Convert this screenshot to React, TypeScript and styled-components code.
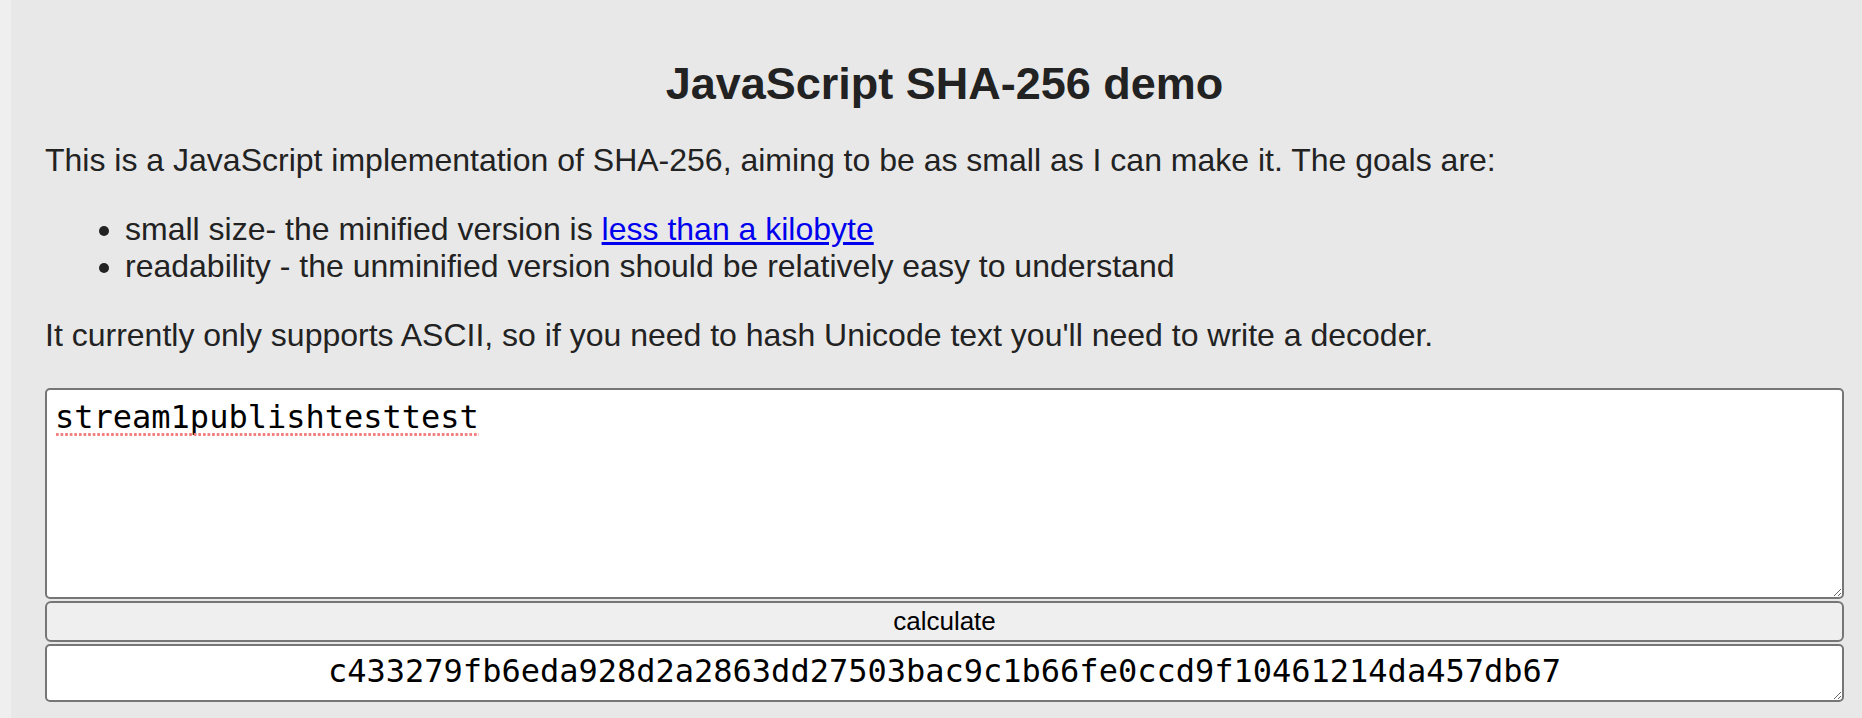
import React from "react";
import styled, { createGlobalStyle } from "styled-components";

const Global = createGlobalStyle`
  html, body {
    margin: 0;
    padding: 0;
    background: #efefef;
  }
  body {
    font-family: "Liberation Sans", Arial, Helvetica, sans-serif;
    color: #222;
  }
`;

const Page = styled.main`
  margin-left: 11px;
  min-height: 718px;
  background: #e8e8e8;
  padding: 58px 18px 0 34px;
  box-sizing: border-box;
`;

const Title = styled.h1`
  margin: 0 0 32px;
  font-size: 45px;
  font-weight: bold;
  line-height: normal;
  text-align: center;
  color: #222;
`;

const Para = styled.p`
  margin: 0 0 32px;
  font-size: 32px;
  line-height: normal;
`;

const List = styled.ul`
  margin: 0 0 32px;
  padding-left: 80px;
  font-size: 32px;
  line-height: normal;
`;

const Link = styled.a`
  color: #0000ee;
  text-decoration: underline;
`;

const Form = styled.div`
  display: flex;
  flex-direction: column;
  gap: 2px;
  padding-top: 2px;
`;

const FieldWrap = styled.div`
  position: relative;
`;

const SpellMark = styled.span<{ $chars: number }>`
  position: absolute;
  left: 10px;
  top: 44px;
  width: ${(p) => p.$chars * 19.27}px;
  height: 5px;
  pointer-events: none;
  background-image: radial-gradient(circle, #f27d7d 1.3px, transparent 1.8px);
  background-size: 4.6px 5px;
  background-repeat: repeat-x;
`;

const Field = styled.textarea<{ $height: number; $center?: boolean }>`
  display: block;
  box-sizing: border-box;
  width: 100%;
  height: ${(p) => p.$height}px;
  margin: 0;
  padding: ${(p) => (p.$center ? "6px 8px" : "8px")};
  border: 2px solid #767676;
  border-radius: 5px;
  background: #fff;
  color: #000;
  font-family: "DejaVu Sans Mono", Menlo, monospace;
  font-size: 32px;
  line-height: normal;
  text-align: ${(p) => (p.$center ? "center" : "left")};
  resize: vertical;
  outline: none;
  overflow: hidden;
`;

const Button = styled.button`
  display: block;
  box-sizing: border-box;
  width: 100%;
  height: 41px;
  margin: 0;
  padding: 0;
  border: 2px solid #767676;
  border-radius: 6px;
  background: #efefef;
  color: #000;
  font-family: "Liberation Sans", Arial, sans-serif;
  font-size: 26px;
`;

const inputText = "stream1publishtesttest";

export default function App() {
  return (
    <>
      <Global />
      <Page>
        <Title>JavaScript SHA-256 demo</Title>
        <Para>
          This is a JavaScript implementation of SHA-256, aiming to be as small
          as I can make it. The goals are:
        </Para>
        <List>
          <li>
            small size- the minified version is{" "}
            <Link href="#">less than a kilobyte</Link>
          </li>
          <li>
            readability - the unminified version should be relatively easy to
            understand
          </li>
        </List>
        <Para>
          It currently only supports ASCII, so if you need to hash Unicode text
          you'll need to write a decoder.
        </Para>
        <Form>
          <FieldWrap>
            <Field $height={211} defaultValue={inputText} spellCheck={false} />
            <SpellMark $chars={inputText.length} />
          </FieldWrap>
          <Button type="button">calculate</Button>
          <Field
            $height={58}
            $center
            readOnly
            defaultValue="c433279fb6eda928d2a2863dd27503bac9c1b66fe0ccd9f10461214da457db67"
          />
        </Form>
      </Page>
    </>
  );
}
